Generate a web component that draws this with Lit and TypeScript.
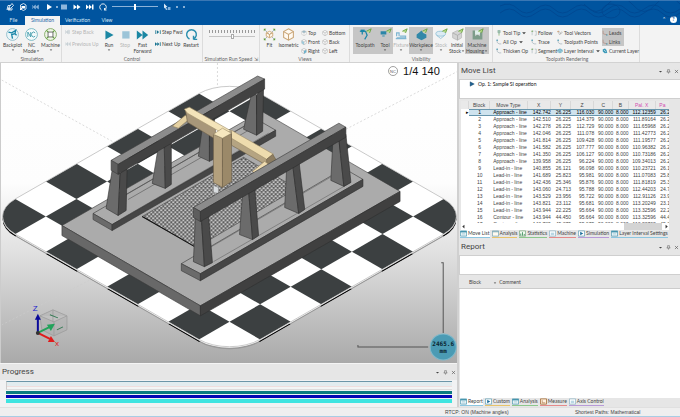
import { LitElement, html, svg, css, nothing, TemplateResult } from "lit";
import { customElement, property, state } from "lit/decorators.js";
import { classMap } from "lit/directives/class-map.js";

const B = "#1a86a8";
const G = "#5f9e3a";

const cube = (c: string) => svg`<path d="M8 1 14 4.500V11.500L8 15 2 11.500V4.500ZM2 4.500 8 8 14 4.500M8 8V15" fill="#fff" stroke=${c} stroke-width="1.200"/>`;
const eye = svg`<path d="M9 4 15 1 13 6" fill="#b9d88c" stroke=${G} stroke-width="1"/>`;

const ICONS: Record<string, unknown> = {
  save: svg`<path d="M2 14 4 5H9M4 14H12V10M7 7 12 1 15 5 9 11 6 11Z" fill="none" stroke="#fff" stroke-width="1.600"/><path d="M3 9H9V14H3Z" fill="#dbe8f5"/>`,
  open: svg`<path d="M3 4 9 1 14 4V12L9 15 3 12Z" fill="none" stroke="#fff" stroke-width="1.600"/><path d="M5 6H12V11H5Z" fill="#fff"/><path d="M2 14 7 9" stroke="#fff" stroke-width="2"/>`,
  stepw: svg`<path d="M1 4V12M2 8 7 4V12ZM8 8 13 4V12Z" fill="#8fb6dc" stroke="#8fb6dc"/>`,
  playw: svg`<path d="M4 2 14 8 4 14Z" fill="#fff"/>`,
  stopw: svg`<path d="M2 3H14V13H2Z" fill="#8fb6dc"/>`,
  ffw: svg`<path d="M1 3 8 8 1 13ZM8 3 15 8 8 13Z" fill="#fff"/>`,
  nextw: svg`<path d="M0 3 6 8 0 13ZM6 3 12 8 6 13ZM12 3H15V13H12Z" fill="#fff"/>`,
  restartw: svg`<path d="M5 14A6.500 6.500 0 1 1 11 14M11 14V10M11 14H15" fill="none" stroke="#fff" stroke-width="1.800"/>`,
  cursor: svg`<path d="M2 1 9 8 6 8 8 13 6 14 4 9 2 11Z" fill="#dce9f6"/><path d="M10 8H15V14H9" fill="#7fb0de"/>`,
  backplot: svg`<circle cx="8" cy="8" r="7.300" fill="#eaf5f8" stroke="#86b8c8"/><path d="M3 5 7 6 12 3 11 7 7 8 8 13M11 7 13 9" fill="none" stroke=${B} stroke-width="1.600"/>`,
  nc: svg`<circle cx="8" cy="8" r="7.300" fill="#f4fafb" stroke="#67b0bd"/><path d="M3.500 11V5L7 11V5M12.500 6A2.600 3 0 1 0 12.500 10" fill="none" stroke="#3f9aaa" stroke-width="1.100"/>`,
  machine: svg`<circle cx="8" cy="8" r="7.300" fill="#eef5e6" stroke="#76a457"/><path d="M3 3 13 13M13 3 3 13" stroke=${G} stroke-width="1.400"/><path d="M5 5H11V11H5Z" fill="#fff" stroke="#555"/>`,
  stepback: svg`<path d="M1 3V13M9 3 3 8 9 13ZM12 3V13" fill="#c9d2d6" stroke="#c9d2d6" stroke-width="2"/>`,
  prevup: svg`<path d="M1 3V13M8 3 2 8 8 13ZM15 3 9 8 15 13Z" fill="#c9d2d6" stroke="#c9d2d6"/>`,
  run: svg`<path d="M3 3 13 8.500 3 14Z" fill="#1b87a3"/>`,
  stop: svg`<path d="M4 4H13V13H4Z" fill="#9cc4d8"/>`,
  ff: svg`<path d="M1 3 8 8.500 1 14ZM8 3 15 8.500 8 14Z" fill="#1b87a3"/>`,
  stepfwd: svg`<path d="M1 3H3V13H1ZM5 3 11 8 5 13ZM13 3H15V13H13Z" fill="#16728f"/>`,
  nextup: svg`<path d="M0 3 6 8 0 13ZM6 3 12 8 6 13ZM13 3H15V13H13Z" fill="#16728f"/>`,
  restart: svg`<path d="M5.500 13.500A6 6 0 1 1 10.500 13.500M10.500 14V9.500M10.500 14H15" fill="none" stroke="#2b8fae" stroke-width="1.800"/>`,
  fit: svg`<path d="M2 2 14 14M14 2 2 14" stroke="#9aa" stroke-width="1"/><path d="M8 4 12 6V10L8 12 4 10V6ZM4 6 8 8 12 6M8 8V12" fill="#fff6ea" stroke="#c9a06a"/><path d="M1 1H4L1 4ZM15 1V4L12 1ZM1 15V12L4 15ZM15 15H12L15 12Z" fill=${G}/>`,
  iso: svg`<path d="M8 1 14 4.500V11.500L8 15 2 11.500V4.500Z" fill="#fffaf2" stroke="#c9a678" stroke-width="1.300"/><path d="M2 4.500 8 8 14 4.500M8 8V15" fill="none" stroke="#c9a678" stroke-width="1.300"/>`,
  cube: cube("#9a9a9a"),
  front: svg`${cube("#9a9a9a")}<path d="M2 4.500 8 8V15L2 11.500Z" fill="#9cc9da"/>`,
  top: svg`${cube("#b5b5b5")}<path d="M8 1 14 4.500 8 8 2 4.500Z" fill="#9cb9c6"/>`,
  right: svg`${cube("#9a9a9a")}<path d="M14 4.500 8 8V15L14 11.500Z" fill="#6cb2cc"/>`,
  toolpath: svg`<path d="M1 4H8L10 9 7 14M4 4V8" fill="none" stroke=${B} stroke-width="1.500"/><path d="M2 2H7V5H2Z" fill=${B}/>${eye}`,
  tool: svg`<path d="M2 4H9V8H2Z" fill="#2b86a8"/><path d="M4 8H7V11H4Z" fill="#7aa9ba"/>${eye}`,
  fixture: svg`<path d="M1 13H14M2 10V6H5V10M6 10H13V12H2" fill="none" stroke="#7fb6d2" stroke-width="1.500"/>${eye}`,
  workpiece: svg`<path d="M2 8 6 5 8 3 10 6 14 8V12L8 15 2 12Z" fill="#3288a8"/>${eye}`,
  stock: svg`<ellipse cx="7" cy="7" rx="6" ry="3" fill="#dcebf3" stroke="#8fc0d6"/><path d="M2 9 7 13 12 9" fill="none" stroke="#8fc0d6"/>${eye}`,
  initial: svg`<path d="M2 6 8 3 13 6V12L8 15 2 12Z" fill="#d4d4d4" stroke="#bbb"/><path d="M2 6 8 9 13 6M8 9V15" fill="none" stroke="#aaa"/>${eye}`,
  housing: svg`<path d="M2 3H5V10L8 8 11 10V3H14V14H2Z" fill="#7d9c8a"/><path d="M5 3H11V8H5Z" fill="#dff0ea"/>${eye}`,
  tip: svg`<path d="M5 1H11V6L8 10 5 6Z" fill="#a6c4b0" stroke="#568f7b"/><path d="M8 10V15" stroke=${G} stroke-width="1.500"/>`,
  path: svg`<path d="M3 2V9L8 13H14" fill="none" stroke="#8fa3ac" stroke-width="1.500"/><circle cx="3" cy="3" r="1.800" fill=${B}/>`,
  follow: svg`<path d="M3 14V3H7M10 3H14V14H10" fill="none" stroke="#8fa3ac" stroke-width="1.300"/><circle cx="3" cy="3" r="1.800" fill=${G}/>`,
  vectors: svg`<path d="M2 4 7 13 12 4M5 2 10 11 15 5" fill="none" stroke="#9a9a9a" stroke-width="1.200"/><circle cx="3" cy="4" r="1.800" fill="#c98f5a"/>`,
  layers: svg`<path d="M8 2 15 6 8 10 1 6Z" fill="#8cc4d8" stroke=${B}/><path d="M1 9 8 13 15 9" fill="none" stroke=${B} stroke-width="1.500"/>`,
  current: svg`<path d="M2 3 8 1 12 5 14 13 7 14 2 9Z" fill="#3d9ab8"/><path d="M5 5 10 10" stroke="#fff" stroke-width="1.500"/>`,
  link: svg`<path d="M3 2V10L13 13" fill="none" stroke="#b07d6c" stroke-width="1.500"/><circle cx="13" cy="13" r="1.500" fill=${B}/>`,
  t1: svg`<path d="M1 2H15V14H1Z" fill="#eef8fb" stroke="#3b8ea8" stroke-width="1.500"/><path d="M1 4H15" stroke="#3b8ea8" stroke-width="3"/><path d="M4 8H12M4 11H12" stroke="#8bb9c8"/>`,
  t2: svg`<path d="M1 2H15V14H1Z" fill="#fffaf0" stroke="#6a9eae" stroke-width="1.500"/><path d="M1 4H15" stroke="#6a9eae" stroke-width="2"/>`,
  t3: svg`<path d="M1 2H15V14H1Z" fill="#f3fbf3" stroke="#6b9e70" stroke-width="1.500"/><path d="M4 13V8M8 13V5M12 13V9" stroke="#3e8f5b" stroke-width="2"/>`,
  t4: svg`<path d="M1 2H15V14H1Z" fill="#fff" stroke="#7fa9bd" stroke-width="1.500"/><path d="M4 6H12V12H4Z" fill="#b9d7e4"/>`,
  t5: svg`<path d="M1 2H15V14H1Z" fill="#fff" stroke="#4f95b0" stroke-width="1.500"/><path d="M5 4 12 8 5 12Z" fill="#1b6c9a"/>`,
  t6: svg`<path d="M1 2H15V14H1Z" fill="#fff1df" stroke="#a8713e" stroke-width="2"/><path d="M5 5V11H12" fill="none" stroke="#a8713e" stroke-width="1.500"/>`,
  drop: svg`<path d="M3 6H13L8 11Z" fill="#444"/>`,
  left: svg`<path d="M11 2V14L4 8Z" fill="#333"/>`,
  rightarrow: svg`<path d="M5 2V14L12 8Z" fill="#333"/>`,
  pin: svg`<path d="M5 2H11V8H13V10H3V8H5ZM8 10V15" fill="#ddd" stroke="#555" stroke-width="1.500"/>`,
  close: svg`<path d="M3 3 13 13M13 3 3 13" stroke="#555" stroke-width="2"/>`,
  opmark: svg`<path d="M3 2 14 8 3 14Z" fill="#1b5f90" stroke="#0f3c5f"/>`,
};

const icon = (n: string, cls = "") => html`<svg class="ic ${cls}" viewBox="0 0 16 16" aria-hidden="true">${ICONS[n]}</svg>`;

const base = css`
  * { box-sizing: border-box; }
  button {
    font: inherit; color: inherit; background: none; border: 0; padding: 0; margin: 0;
    display: inline-flex; align-items: center; justify-content: center; white-space: nowrap;
  }
  .ic { width: 7px; height: 7px; flex: none; display: block; }
`;

type Tool = { i: string; t: string; t2?: string; a?: boolean; dis?: boolean; m?: boolean };

@customElement("title-bar")
class TitleBar extends LitElement {
  @state() tab = "Simulation";
  static styles = [base, css`
    :host { display: grid; grid-template-rows: 13px 12px; background: linear-gradient(#3a77b4 0 1px, #00549f 1px); color: #fff; position: relative; }
    .quick { display: flex; align-items: center; padding-left: 6px; gap: 5px; }
    .quick .ic { width: 8px; height: 8px; }
    .tiny { width: 2px; height: 2px; background: #b4cde6; border-radius: 1px; }
    .mid { margin: 0 -3px 0 -2px; }
    input { appearance: none; width: 46px; height: 7px; margin: 0; background: linear-gradient(#8db3d9, #8db3d9) center / 100% 1px no-repeat; }
    input::-webkit-slider-thumb { appearance: none; width: 2px; height: 6px; background: #fff; }
    .tabs { display: flex; align-items: flex-end; padding-left: 2px; }
    .tabs button { height: 9px; width: 35px; color: #d5e5f4; }
    .tabs .file { width: 23px; }
    .tabs .view { width: 24px; }
    .tabs .on { background: #f3f3f3; color: #1d62a8; }
    .help { margin-left: auto; display: flex; gap: 4px; align-items: center; padding: 0 3px 2px 0; }
    .help span { width: 7px; height: 7px; border-radius: 4px; background: #fff; color: #00549f; text-align: center; line-height: 7px; font-weight: bold; }
    .deco { position: absolute; right: 0; top: 1px; width: 180px; height: 18px; }
  `];
  render() {
    const tabs = [["File", "file"], ["Simulation", ""], ["Verification", ""], ["View", "view"]];
    return html`
      <svg class="deco" viewBox="0 0 180 18" aria-hidden="true">
        <path d="M0 5Q10 0 18 8T36 8 54 8 72 8 90 8 108 8 126 8 144 8 162 8 180 8M0 12Q10 4 18 12T36 12 54 12 72 12 90 12 108 12 126 12 144 12 162 12 180 12M84 3Q96 18 108 3T132 3 156 3 180 3M102 10A9 7 0 1 0 120 10 9 7 0 1 0 102 10" fill="none" stroke="#00468f" stroke-width="0.800"/>
      </svg>
      <div class="quick">
        ${["save", "open", "stepw", "playw"].map((n) => html`<button aria-label=${n}>${icon(n)}</button>`)}
        <span class="tiny mid"></span>
        ${["stopw", "ffw", "nextw", "restartw"].map((n) => html`<button aria-label=${n}>${icon(n)}</button>`)}
        <input type="range" aria-label="Simulation speed" value="50" />
        <button aria-label="Select">${icon("cursor")}</button>
        <span class="tiny"></span><span class="tiny"></span>
      </div>
      <div class="tabs">
        ${tabs.map(([t, c]) => html`<button class=${classMap({ on: this.tab === t, [c || "tab"]: true })} @click=${() => (this.tab = t)}>${t}</button>`)}
        <div class="help">⌃<span>?</span></div>
      </div>`;
  }
}

@customElement("tool-ribbon")
class ToolRibbon extends LitElement {
  static styles = [base, css`
    :host { display: flex; background: #f3f3f3; color: #444; border-bottom: 1px solid #d2d2d2; height: 38px; overflow: hidden; }
    section { display: grid; grid-template-rows: 30px 7px; flex: none; border-right: 1px solid #dcdcdc; padding-top: 1px; }
    h2 { font: inherit; margin: 0; text-align: center; color: #666; line-height: 6px; white-space: nowrap; }
    .body { display: flex; align-items: flex-start; }
    .sim { width: 62px; padding-left: 3px; } .ctl { width: 141px; } .speed { width: 57px; }
    .views { width: 90px; } .vis { width: 143px; } .rend { width: 147px; }
    .big { flex-direction: column; justify-content: flex-start; width: 19px; height: 27px; padding-top: 1px; line-height: 6px; margin-top: 1px; }
    .big .ic { width: 13px; height: 13px; margin-bottom: 1px; }
    .big .arr, .row .arr { width: 4px; height: 4px; margin: 0; }
    .line { display: flex; align-items: center; }
    .wide { width: 24px; }
    .slim { width: 16px; }
    .on { background: #c6c6c6; }
    .off { color: #b5b5b5; }
    .col { display: grid; grid-auto-rows: 9px; align-items: center; justify-items: start; padding-top: 2px; }
    .col.two { grid-auto-rows: 12px; padding-top: 0; }
    .row { gap: 1px; line-height: 8px; }
    .row .ic { width: 6px; height: 6px; }
    .scale { padding: 4px 4px 0 6px; display: grid; width: 100%; }
    .ticks { height: 3px; background: repeating-linear-gradient(90deg, #999 0 1px, transparent 1px 3px); }
    input { appearance: none; width: 100%; margin: 0; height: 6px; background: linear-gradient(#c4c4c4, #c4c4c4) center / 100% 1px no-repeat; }
    input::-webkit-slider-thumb { appearance: none; width: 3px; height: 5px; background: #fff; border: 1px solid #aaa; }
    .tip { width: 35px; } .c23 { width: 24px; } .c28 { width: 28px; } .seg { width: 26px; } .pts { width: 45px; } .c38 { width: 39px; }
    .lead { padding-left: 3px; }
    .gap { margin-left: 3px; }
    .rowon { background: #c6c6c6; padding-right: 1px; height: 9px; width: 22px; justify-content: flex-start; }
  `];
  big(t: Tool, cls = "") {
    const arrow = t.m ? icon("drop", "arr") : nothing;
    return html`<button class="big ${cls} ${t.a ? "on" : ""} ${t.dis ? "off" : ""}">${icon(t.i)}<span>${t.t}</span>${t.t2 ? html`<span class="line">${t.t2}${arrow}</span>` : arrow}</button>`;
  }
  rows(list: Tool[], cls: string) {
    return html`<div class="col ${cls}">${list.map((t) => html`<button class="row ${t.dis ? "off" : ""} ${t.a ? "rowon" : ""}">${icon(t.i)}${t.t}${t.m ? icon("drop", "arr") : nothing}</button>`)}</div>`;
  }
  render() {
    return html`
      <section class="sim"><div class="body">
        ${this.big({ i: "backplot", t: "Backplot", m: true })}${this.big({ i: "nc", t: "NC", t2: "Mode", m: true })}${this.big({ i: "machine", t: "Machine", m: true })}
      </div><h2>Simulation</h2></section>
      <section class="ctl"><div class="body">
        ${this.rows([{ i: "stepback", t: "Step Back", dis: true }, { i: "prevup", t: "Previous Up", dis: true }], "two c38 lead")}
        ${this.big({ i: "run", t: "Run", m: true }, "slim")}${this.big({ i: "stop", t: "Stop", dis: true }, "slim")}${this.big({ i: "ff", t: "Fast", t2: "Forward" })}
        ${this.rows([{ i: "stepfwd", t: "Step Fwd" }, { i: "nextup", t: "Next Up" }], "two c28 gap")}
        ${this.big({ i: "restart", t: "Restart" }, "slim")}
      </div><h2>Control</h2></section>
      <section class="speed"><div class="body"><div class="scale"><div class="ticks"></div><input type="range" aria-label="Simulation Run Speed" value="50" /></div></div><h2>Simulation Run Speed ⇲</h2></section>
      <section class="views"><div class="body">
        ${this.big({ i: "fit", t: "Fit" })}${this.big({ i: "iso", t: "Isometric" })}
        ${this.rows([{ i: "top", t: "Top" }, { i: "front", t: "Front" }, { i: "right", t: "Right" }], "c23 lead")}
        ${this.rows([{ i: "cube", t: "Bottom" }, { i: "cube", t: "Back" }, { i: "cube", t: "Left" }], "c28")}
      </div><h2>Views</h2></section>
      <section class="vis"><div class="body lead">
        ${this.big({ i: "toolpath", t: "Toolpath", a: true }, "wide")}${this.big({ i: "tool", t: "Tool", a: true, m: true }, "slim")}
        ${this.big({ i: "fixture", t: "Fixture", dis: true, m: true }, "slim")}${this.big({ i: "workpiece", t: "Workpiece", a: true, m: true }, "wide")}
        ${this.big({ i: "stock", t: "Stock", dis: true, m: true }, "slim")}${this.big({ i: "initial", t: "Initial", t2: "Stock", m: true }, "slim")}
        ${this.big({ i: "housing", t: "Machine", t2: "Housing", m: true, a: true }, "wide")}
      </div><h2>Visibility</h2></section>
      <section class="rend"><div class="body lead">
        ${this.rows([{ i: "tip", t: "Tool Tip", m: true }, { i: "path", t: "All Op", m: true }, { i: "path", t: "Thicken Op" }], "tip")}
        ${this.rows([{ i: "follow", t: "Follow" }, { i: "path", t: "Trace" }, { i: "follow", t: "Segment" }], "seg")}
        ${this.rows([{ i: "vectors", t: "Tool Vectors" }, { i: "path", t: "Toolpath Points" }, { i: "layers", t: "Layer Interval", m: true }], "pts")}
        ${this.rows([{ i: "link", t: "Leads", a: true }, { i: "link", t: "Links", a: true }, { i: "current", t: "Current Layer" }], "c38")}
      </div><h2>Toolpath Rendering</h2></section>`;
  }
}

type Pt = [number, number];
const poly = (pts: Pt[], fill: string, stroke = "none") =>
  svg`<polygon points=${pts.map((p) => p.join(",")).join(" ")} fill=${fill} stroke=${stroke} stroke-width="0.600" stroke-linejoin="round"/>`;

@customElement("machine-view")
class MachineView extends LitElement {
  static styles = css`
    :host { display: block; min-height: 0; overflow: hidden; background: linear-gradient(#fff 0%, #fdfdfd 40%, #e2e2e2 62%, #a9a9a9 100%); border-left: 1px solid #ccc; }
    svg { width: 100%; height: 100%; display: block; }
    .count { font: 11px "Liberation Sans", sans-serif; fill: #111; }
    .badge { font: 4px "Liberation Sans", sans-serif; fill: #555; }
    .len { font: bold 6px "DejaVu Sans Mono", monospace; fill: #0b2631; text-anchor: middle; }
    .axis { font: 8px "Liberation Sans", sans-serif; }
  `;
  // Leg: outer face corners (tl, tr, br, bl), then the top-right and bottom-right of the shaded side.
  leg(tl: Pt, tr: Pt, br: Pt, bl: Pt, str: Pt, sbr: Pt) {
    return [poly([tl, tr, br, bl], "#6b6b6b", "#333"), poly([tr, str, sbr, br], "#4a4a4a", "#2c2c2c")];
  }
  prism(l: Pt, f: Pt, r: Pt, b: Pt, h: number, c: string[]) {
    return [
      poly([l, b, r, f], c[0], "#3a3a3a"),
      poly([l, f, [f[0], f[1] + h], [l[0], l[1] + h]], c[1], "#3a3a3a"),
      poly([f, r, [r[0], r[1] + h], [f[0], f[1] + h]], c[2], "#2e2e2e"),
    ];
  }
  render() {
    const n = 8;
    const tiles: unknown[] = [];
    for (let i = 0; i < n; i++)
      for (let j = 0; j < n; j++) if ((i + j) % 2) tiles.push(svg`<rect x=${i} y=${j} width="1" height="1"/>`);
    const metal = ["#8c8c8c", "#5e5e5e", "#424242"];
    const foot = ["#ababab", "#6b6b6b", "#464646"];
    return html`<svg viewBox="0 64 457 299" preserveAspectRatio="xMidYMid slice" role="img" aria-label="Machine simulation">
      <defs>
        <clipPath id="board"><rect width="8" height="8" rx="1"/></clipPath>
        <pattern id="mesh" width="4" height="4" patternUnits="userSpaceOnUse"><rect width="4" height="4" fill="#c4c4c4"/><path d="M0 0H2V1H0ZM2 2H4V3H2Z" fill="#222"/><path d="M0 1H2V2H0ZM2 3H4V4H2Z" fill="#777"/></pattern>
      </defs>
      <path d="M2 81 130 152M2 325 110 270M217 64V92M457 72 345 130" stroke="#ccc" stroke-width="0.700" stroke-dasharray="2 2" fill="none"/>
      <g transform="matrix(30.500 17.500 -30.500 17.500 229 79.500)"><g clip-path="url(#board)"><rect width="8" height="8" fill="#999"/><g fill="#0c0c0c">${tiles}</g></g></g>
      <g transform="matrix(30.500 17.500 -30.500 17.500 229 78)"><rect width="8" height="8" rx="1" fill="#fff"/></g>
      <g transform="matrix(30.500 17.500 -30.500 17.500 229 77)">
        <g clip-path="url(#board)"><rect width="8" height="8" fill="#fff"/><g fill="#3c4041">${tiles}</g></g>
        <rect width="8" height="8" rx="1" fill="none" stroke="#bbb" stroke-width="0.020"/>
      </g>
      ${this.prism([62, 226], [200, 306], [399, 192], [261, 112], 10, ["#ababab", "#686868", "#404040"])}
      ${poly([[142, 217], [243, 158], [296, 189], [196, 248]], "url(#mesh)", "#444")}
      <path d="M142 217 196 248" stroke="#111"/>
      ${this.prism([93, 214], [112, 225], [275, 131], [256, 120], 6, foot)}
      <path d="M123 197 252 122M128 200 262 123M120 220 268 134" stroke="#555" stroke-width="0.600"/>
      ${this.leg([251, 94], [256, 96], [256, 136], [243, 130], [263, 86], [262, 132])}
      ${this.leg([202, 128], [209, 129], [209, 162], [198, 157], [214, 118], [213, 160])}
      ${this.leg([158, 148], [164, 148], [165, 189], [152, 184], [171, 141], [171, 185])}
      ${this.leg([112, 171], [120, 174], [118, 216], [106, 209], [127, 167], [126, 211])}
      ${this.prism([111, 161], [118, 165], [264, 80], [257, 77], 10, metal)}
      ${poly([[172, 127], [185, 116], [190, 119], [178, 129]], "#e6d2a3", "#8c7c59")}
      ${poly([[185, 110], [215, 128], [215, 140], [187, 123]], "#a8977a", "#6e6149")}
      ${poly([[184, 110], [189, 108], [231, 132], [222, 134], [187, 114]], "#f4e4ba", "#9d8c68")}
      ${poly([[231, 133], [273, 157], [266, 166], [231, 146]], "#b5a482", "#6e6149")}
      ${poly([[231, 131], [236, 134], [273, 155], [266, 160], [231, 139]], "#eedcae", "#9d8c68")}
      ${poly([[266, 160], [272, 155], [277, 163], [266, 169]], "#8d7d61", "#6e6149")}
      ${poly([[252, 172], [264, 162], [268, 165], [256, 176]], "#efdcb0", "#8c7c59")}
      ${poly([[213, 135], [222, 139], [222, 188], [213, 183]], "#b3a07d", "#6e6149")}
      ${poly([[222, 139], [231, 134], [231, 182], [222, 188]], "#9b8969", "#6e6149")}
      ${poly([[213, 135], [222, 129], [231, 134], [222, 139]], "#f6e7be", "#9d8c68")}
      ${poly([[213, 186], [218, 188], [218, 194], [213, 193]], "#d9dde0", "#888")}
      <path d="M215 194V198" stroke="#ddd"/>
      ${this.prism([181, 264], [200, 274], [362, 180], [343, 169], 7, foot)}
      <path d="M206 250 338 173M213 262 350 183" stroke="#666" stroke-width="0.600"/>
      ${this.leg([332, 142], [338, 140], [343, 187], [330, 181], [345, 135], [350, 183])}
      ${this.leg([286, 168], [292, 166], [298, 214], [284, 208], [298, 160], [304, 210])}
      ${this.leg([242, 194], [248, 191], [252, 240], [239, 235], [254, 186], [258, 236])}
      ${this.leg([195, 218], [201, 219], [204, 267], [193, 262], [208, 214], [212, 263])}
      ${this.prism([193, 208], [200, 212], [345, 128], [338, 124], 10, metal)}
      <circle cx="392" cy="72" r="4.500" fill="#fff" stroke="#777" stroke-width="0.700"/><text class="badge" x="389" y="73.500">NC</text>
      <text class="count" x="402" y="76">1/4 140</text>
      <path d="M357 345V347H427M440 263H442V333" fill="none" stroke="#555"/>
      <circle cx="442" cy="347" r="13" fill="#4b9bb4" stroke="#7db9cb"/>
      <text class="len" x="442" y="346">2465.6</text><text class="len" x="442" y="353">mm</text>
      <path d="M40 316 53 310 67 316V330L54 336 42 330ZM40 316 54 322 67 316M54 322V336M53 310V322" fill="#8a8a8a" fill-opacity="0.150" stroke="#999" stroke-width="0.700"/>
      <path d="M50 315 58 318M57 330 63 327" stroke="#367a55"/>
      <path d="M38 333V318" stroke="#0a0a9a" stroke-width="2"/><path d="M35 320 38 314 41 320Z" fill="#0a0a9a"/>
      <path d="M38 333 50 327" stroke="#22a25a" stroke-width="2"/><path d="M47 325 55 324 51 331Z" fill="#22a25a"/>
      <path d="M38 333 50 339" stroke="#e01b1b" stroke-width="2"/><path d="M51 336 55 342 48 342Z" fill="#e01b1b"/><circle cx="38" cy="333" r="2" fill="#333"/>
      <text class="axis" x="33" y="311" fill="#2222cc">Z</text><text class="axis" x="55" y="346" fill="#e01b1b">x</text>
    </svg>`;
  }
}

@customElement("dock-panel")
class DockPanel extends LitElement {
  @property() heading = "";
  static styles = [base, css`
    :host { display: flex; flex-direction: column; min-height: 0; min-width: 0; background: #e6e6e6; }
    header { display: flex; align-items: center; height: 16px; flex: none; padding: 0 1px 0 2px; gap: 3px; }
    h2 { font: 8px/12px Roboto, sans-serif; margin: 0; flex: 1; color: #444; }
    header .ic { width: 5px; height: 5px; }
  `];
  render() {
    return html`<header><h2>${this.heading}</h2>${["drop", "pin", "close"].map((n) => html`<button aria-label=${n}>${icon(n)}</button>`)}</header><slot></slot>`;
  }
}

@customElement("dock-tabs")
class DockTabs extends LitElement {
  @property({ attribute: false }) tabs: [string, string, string][] = [];
  static styles = [base, css`
    :host { display: flex; height: 9px; flex: none; padding-left: 1px; gap: 2px; background: #e6e6e6; color: #444; }
    button { gap: 1px; height: 8px; border-bottom: 1px solid var(--line); }
    .on { background: #fff; }
    .blue { --line: #8cc6e0; } .gold { --line: #e8c36a; } .green { --line: #8cc78c; } .red { --line: #e58a8a; } .violet { --line: #b89ad8; }
  `];
  render() {
    return this.tabs.map(([i, t, c], k) => html`<button class="${c} ${k ? "" : "on"}">${icon(i)}${t}</button>`) as unknown as TemplateResult;
  }
}

const MOVES = `Approach - line|142.742|26.225|116.030|90.000|8.000|112.12359|26.2
Approach - line|142.510|26.225|114.379|90.000|8.000|111.89164|26.2
Approach - line|142.278|26.225|112.729|90.000|8.000|111.65968|26.2
Approach - line|142.046|26.225|111.078|90.000|8.000|111.42773|26.2
Approach - line|141.814|26.225|109.428|90.000|8.000|111.19577|26.2
Approach - line|141.582|26.225|107.777|90.000|8.000|110.96382|26.2
Approach - line|141.350|26.225|106.127|90.000|8.000|110.73186|26.2
Approach - line|139.958|26.225|96.224|90.000|8.000|109.34013|26.2
Lead-in - line|140.855|26.121|96.098|90.000|8.000|110.23721|26.1
Lead-in - line|141.689|25.823|95.981|90.000|8.000|111.07083|25.8
Lead-in - line|142.436|25.346|95.876|90.000|8.000|111.81819|25.3
Lead-in - line|143.060|24.713|95.788|90.000|8.000|112.44203|24.7
Lead-in - line|143.529|23.956|95.722|90.000|8.000|112.91126|23.9
Lead-in - line|143.821|23.112|95.681|90.000|8.000|113.20249|23.1
Lead-in - line|143.944|22.225|95.664|90.000|8.000|113.32596|22.2
Contour - line|143.944|44.450|95.664|90.000|8.000|113.32596|44.4
Contour - line|143.789|45.375|95.679|90.000|8.000|113.20702|45.3`.split("\n").map((r) => r.split("|"));

@customElement("app-root")
class AppRoot extends LitElement {
  static styles = [base, css`
    :host { display: grid; grid-template-rows: auto auto minmax(0, 1fr) 10px; height: 100vh; font: 5px/7px Lato, "Liberation Sans", sans-serif; background: #e6e6e6; color: #444; overflow: hidden; }
    main { display: grid; grid-template-columns: minmax(0, 457fr) minmax(0, 223fr); min-height: 0; }
    .left { display: grid; grid-template-rows: minmax(0, 1fr) 44px; min-width: 0; min-height: 0; }
    .right { display: grid; grid-template-rows: 176px minmax(0, 1fr); min-width: 0; min-height: 0; border-left: 2px solid #d0d0d0; }
    .progress { border-top: 1px solid #f4f4f4; }
    .chart { flex: 1; background: #f1f2f3; padding: 1px 5px 0 6px; }
    .track { height: 9px; border-top: 1px solid #6c96a8; border-bottom: 1px solid #dcdcdc; border-left: 1px solid #ccc; background: linear-gradient(#e2ecef 0 4px, #f0dedd 4px 5px, #f2f5f5 5px); margin-bottom: 1px; }
    .bar { height: 3px; margin-bottom: 1px; }
    .teal { background: #0c7b80; } .navy { background: #0606b4; } .cyan { background: #3fe4e0; height: 4px; }
    .box { background: #fff; border: 1px solid #cfcfcf; border-right: 0; height: 20px; flex: none; line-height: 8px; color: #111; display: flex; align-items: flex-start; gap: 3px; padding: 0 0 0 9px; }
    .box .ic { width: 6px; height: 6px; margin-top: 1px; }
    .grid { flex: 1; min-height: 0; overflow: hidden; margin: 2px 11px 0 2px; background: #fff; }
    table { border-collapse: separate; border-spacing: 0; table-layout: fixed; width: 209px; font: 5px/7px "Liberation Sans", sans-serif; }
    th, td { padding: 0; height: 7px; text-align: right; font-weight: normal; white-space: nowrap; }
    th { text-align: center; background: #e9e9e9; height: 8px; border-right: 1px solid #d8d8d8; }
    th.pal { color: #d24bb0; }
    td.mid { text-align: center; }
    td.txt { text-align: left; padding-left: 3px; }
    .sel td { background: #cfe3ee; box-shadow: inset 0 1px #6796ad, inset 0 -1px #6796ad; color: #000; }
    .sel td:first-child { background: #fff; box-shadow: none; }
    .c0 { width: 8px; } .c1 { width: 21px; } .c2 { width: 37px; } .c3 { width: 23px; } .c4 { width: 20px; } .c5 { width: 23px; } .c6 { width: 19px; } .c7 { width: 15px; } .c8 { width: 27px; } .c9 { width: 14px; }
    .scroll { height: 7px; flex: none; margin: 0 11px 0 2px; background: #fff; display: flex; align-items: center; justify-content: space-between; }
    .scroll .ic { width: 5px; height: 5px; }
    .thumb { flex: 1; margin-left: 158px; margin-right: 2px; height: 7px; background: #d4d4d4; }
    .rhead { display: flex; flex: none; height: 14px; align-items: center; gap: 12px; padding: 2px 0 0 10px; border-bottom: 1px solid #ccc; }
    .rhead .ic { width: 4px; height: 4px; margin-right: -10px; }
    .paper { flex: 1; background: #fff; margin-left: 1px; }
    footer { display: grid; grid-template-columns: minmax(0, 445fr) minmax(0, 130fr) minmax(0, 105fr); background: #efefef; border-bottom: 1px solid #a8cde4; font: 5px/9px "Liberation Sans", sans-serif; border-top: 1px solid #e0e0e0; }
  `];
  render() {
    const cols = ["", "Block", "Move Type", "X", "Y", "Z", "C", "B", "Pal. X", "Pa"];
    return html`
      <title-bar></title-bar>
      <tool-ribbon></tool-ribbon>
      <main>
        <div class="left">
          <machine-view></machine-view>
          <dock-panel class="progress" heading="Progress">
            <div class="chart"><div class="track"></div><div class="bar teal"></div><div class="bar navy"></div><div class="bar cyan"></div></div>
          </dock-panel>
        </div>
        <div class="right">
          <dock-panel heading="Move List">
            <div class="box">${icon("opmark")}Op. 1: Sample SI operation</div>
            <div class="grid"><table>
              <thead><tr>${cols.map((c, i) => html`<th class="c${i} ${i > 7 ? "pal" : ""}">${c}</th>`)}</tr></thead>
              <tbody>${MOVES.map((r, k) => html`<tr class=${k ? "" : "sel"}><td>${k ? "" : "▸"}</td><td class="mid">${k + 1}</td>${r.map((v, i) => html`<td class=${i ? "" : "txt"}>${v}</td>`)}</tr>`)}</tbody>
            </table></div>
            <div class="scroll">${icon("left")}<div class="thumb"></div>${icon("rightarrow")}</div>
            <dock-tabs .tabs=${[["t1", "Move List", "blue"], ["t2", "Analysis", "gold"], ["t3", "Statistics", "green"], ["t4", "Machine", "red"], ["t5", "Simulation", "violet"], ["t1", "Layer Interval Settings", "blue"]]}></dock-tabs>
          </dock-panel>
          <dock-panel heading="Report">
            <div class="box"></div>
            <div class="rhead"><span>Block</span>${icon("drop")}<span>Comment</span></div>
            <div class="paper"></div>
            <dock-tabs .tabs=${[["t1", "Report", "blue"], ["t5", "Custom", "gold"], ["t1", "Analysis", "green"], ["t6", "Measure", "red"], ["t4", "Axis Control", "violet"]]}></dock-tabs>
          </dock-panel>
        </div>
      </main>
      <footer><span></span><span>RTCP: ON (Machine angles)</span><span>Shortest Paths: Mathematical</span></footer>`;
  }
}
